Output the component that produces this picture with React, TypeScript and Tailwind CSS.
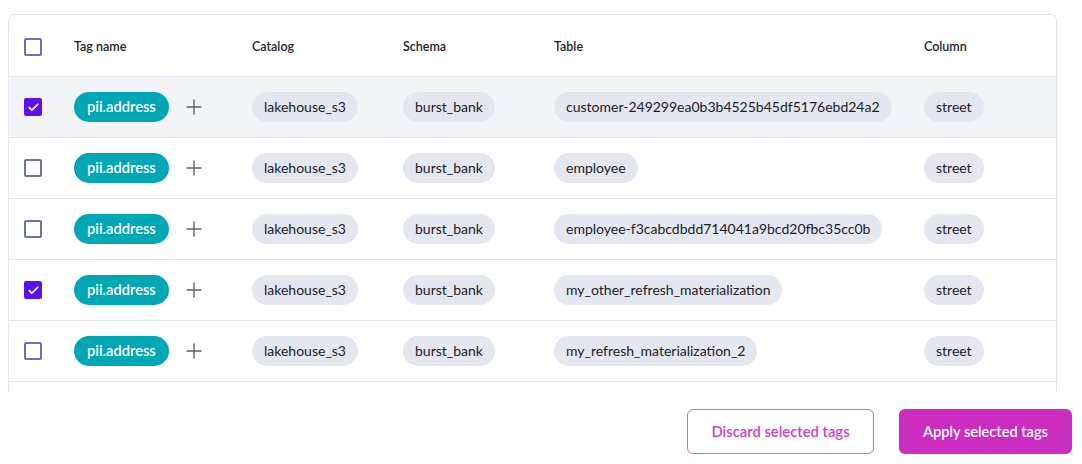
import { Check, Plus } from 'lucide-react';

type Row = {
  tag: string;
  catalog: string;
  schema: string;
  table: string;
  column: string;
  selected: boolean;
};

const rows: Row[] = [
  { tag: 'pii.address', catalog: 'lakehouse_s3', schema: 'burst_bank', table: 'customer-249299ea0b3b4525b45df5176ebd24a2', column: 'street', selected: true },
  { tag: 'pii.address', catalog: 'lakehouse_s3', schema: 'burst_bank', table: 'employee', column: 'street', selected: false },
  { tag: 'pii.address', catalog: 'lakehouse_s3', schema: 'burst_bank', table: 'employee-f3cabcdbdd714041a9bcd20fbc35cc0b', column: 'street', selected: false },
  { tag: 'pii.address', catalog: 'lakehouse_s3', schema: 'burst_bank', table: 'my_other_refresh_materialization', column: 'street', selected: true },
  { tag: 'pii.address', catalog: 'lakehouse_s3', schema: 'burst_bank', table: 'my_refresh_materialization_2', column: 'street', selected: false },
];

const cols = 'grid grid-cols-[65px_178px_151px_151px_370px_1fr] items-center';

function Checkbox({ checked }: { checked: boolean }) {
  if (checked) {
    return (
      <div className="w-[18px] h-[18px] rounded-[2px] bg-[#5a10f2] flex items-center justify-center">
        <Check size={13} strokeWidth={3.2} className="text-white" />
      </div>
    );
  }
  return <div className="w-[18px] h-[18px] rounded-[2px] border-2 border-[#6a72a6] bg-white" />;
}

function Pill({ children }: { children: React.ReactNode }) {
  return (
    <span className="inline-flex items-center h-[30px] px-3 pb-[2px] rounded-full bg-[#e4e7f0] text-[#1b1c28] text-[14px] whitespace-nowrap">
      {children}
    </span>
  );
}

export default function App() {
  return (
    <div className="w-[1082px] h-[464px] bg-white font-['Lato',sans-serif] pt-[14px] pl-2 pr-[10px]">
      {/* table area, clipped like a scroll container */}
      <div className="mr-[15px] h-[378px] overflow-hidden rounded-t-[6px] border border-b-0 border-[#e3e6ee]">
        <div className={`${cols} h-[62px] pt-[3px] border-b border-[#e3e6ee] text-[12.5px] font-semibold text-[#1c1d2a]`}>
          <div className="pl-[15px]">
            <Checkbox checked={false} />
          </div>
          <div>Tag name</div>
          <div>Catalog</div>
          <div>Schema</div>
          <div>Table</div>
          <div>Column</div>
        </div>
        {rows.map((r, i) => (
          <div
            key={i}
            className={`${cols} h-[61px] border-b border-[#e3e6ee] ${i === 0 ? 'bg-[#f3f4f8]' : 'bg-white'}`}
          >
            <div className="pl-[15px]">
              <Checkbox checked={r.selected} />
            </div>
            <div className="flex items-center">
              <span className="inline-flex items-center h-[30px] px-[13px] pb-[2px] rounded-full bg-[#00a7b4] text-white text-[14.7px] font-semibold">
                {r.tag}
              </span>
              <Plus size={24} strokeWidth={1.4} className="ml-[13px] text-[#5f6168]" />
            </div>
            <div>
              <Pill>{r.catalog}</Pill>
            </div>
            <div>
              <Pill>{r.schema}</Pill>
            </div>
            <div>
              <Pill>{r.table}</Pill>
            </div>
            <div>
              <Pill>{r.column}</Pill>
            </div>
          </div>
        ))}
      </div>

      <div className="flex justify-end gap-[25px] mt-[17px]">
        <button className="w-[187px] h-[45px] rounded-[6px] border border-[#e25ada] text-[#d63ccb] text-[14.8px] font-semibold bg-white">
          Discard selected tags
        </button>
        <button className="w-[173px] h-[45px] rounded-[6px] bg-[#cd2cc1] text-white text-[14.6px] font-semibold">
          Apply selected tags
        </button>
      </div>
    </div>
  );
}
